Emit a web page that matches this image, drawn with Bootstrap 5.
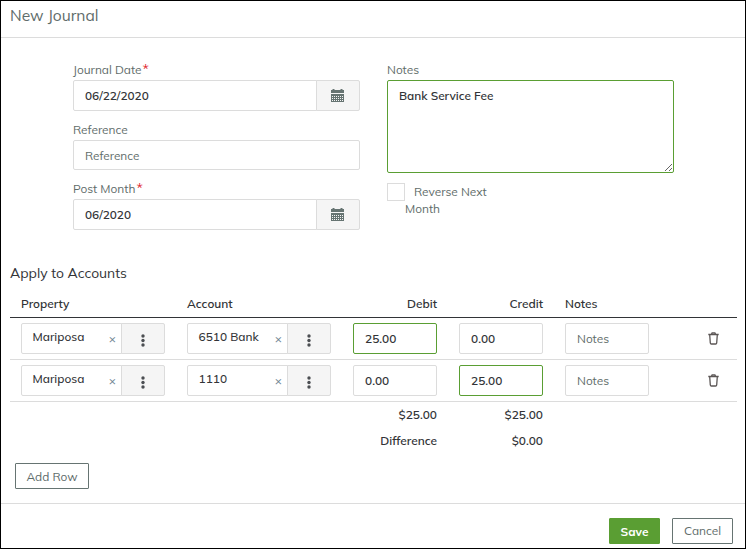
<!DOCTYPE html>
<html lang="en">
<head>
<meta charset="utf-8">
<meta name="viewport" content="width=device-width, initial-scale=1">
<title>New Journal</title>
<link href="https://cdn.jsdelivr.net/npm/bootstrap@5.3.0/dist/css/bootstrap.min.css" rel="stylesheet">
<style>
  :root { --ink: #323437; --soft: #5f6d6b; --line: #dcdcdc; --green: #5a9e33; }
  body { font-family: Mulish, Muli, "Open Sans", sans-serif; font-size: 11.9px; line-height: 17px; color: var(--ink); background: #fff; }
  .journal { height: 549px; border: 1px solid #000; overflow: hidden; }
  .journal-head { height: 37px; padding: 4px 9px 0; border-bottom: 1px solid var(--line); color: var(--soft); font-size: 15.6px; line-height: 20px; }
  .journal-form { padding: 23px 71px 0 72px; gap: 27px; height: 225px; }
  .journal-form > div { width: 287px; }
  .field-label { display: block; height: 19px; line-height: 18px; color: var(--soft); }
  .req { color: #e0262b; font-size: 14px; line-height: 10px; margin-left: 1px; }
  .form-control, .input-group-text { border-color: var(--line); border-radius: 2px; font-size: 11.9px; line-height: 17px; color: var(--ink); }
  .form-control { height: 31px; padding: 6px 11px; font-weight: 600; }
  .form-control::placeholder { color: var(--soft); font-weight: 400; opacity: 1; }
  .form-control.short { height: 30px; }
  .form-control.active-field { border-color: var(--green); }
  .journal-form .form-control { font-weight: 650; font-size: 11.8px; }
  .input-group-text { width: 44px; padding: 0 1px 0 0; justify-content: center; background: #f5f5f5; color: #667472; }
  textarea.form-control { height: 93px; resize: vertical; }
  .gap-field { height: 10px; }
  .form-check-input.box { width: 18px; height: 18px; margin: 0; border: 1px solid var(--line); border-radius: 0; flex: none; }
  .check-text { color: var(--soft); width: 90px; text-indent: 9px; }
  .section-title { font-size: 13.9px; line-height: 20px; margin: 0 0 0 9px; }
  .lines { width: 727px; margin: 10px 0 0 9px; table-layout: fixed; border-collapse: separate; border-spacing: 0; font-weight: 600; }
  .lines th { height: 25px; padding: 2px 11px 5px; line-height: 17px; font-weight: 650; border-bottom: 1px solid var(--ink); }
  .lines tbody td { height: 42px; padding: 5px 11px; border-bottom: 1px solid var(--line); }
  .lines tfoot td { height: 26px; padding: 4px 11px 5px; line-height: 17px; font-weight: 650; }
  .lines .input-group-text { padding: 3px 1px 0 0; }
  .picked { font-weight: 500; padding: 4px 5px 0 10.5px; }
  .picked .clear { color: #6f8592; font-size: 12px; line-height: 22px; }
  .btn { height: 26px; padding: 0; font-size: 11.9px; line-height: 25px; border-radius: 1px; }
  .btn-line { border-color: #667472; color: var(--soft); background: #fff; }
  .btn-go { width: 51px; line-height: 23px; background: var(--green); border-color: var(--green); color: #fff; font-weight: 700; }
  .add-row { width: 74px; margin: 9px 0 0 14px; }
  .cancel { width: 61px; line-height: 24px; }
  .journal-foot { margin-top: 14px; padding: 14px 12px 0; gap: 12px; border-top: 1px solid var(--line); }
  .bin-icon { margin: 0 7px 0 auto; }
  svg { display: block; }
</style>
</head>
<body>
<svg width="0" height="0" class="position-absolute" aria-hidden="true">
  <symbol id="cal" viewBox="0 0 13 13">
    <path fill="currentColor" fill-rule="evenodd" d="M0 1h1.5V0h2v1h6V0h2v1H13v3H0zM0 5h13v8H0zM1 7v1h1V7zM3 7v1h1V7zM5 7v1h1V7zM7 7v1h1V7zM9 7v1h1V7zM11 7v1h1V7zM1 9v1h1V9zM3 9v1h1V9zM5 9v1h1V9zM7 9v1h1V9zM9 9v1h1V9zM11 9v1h1V9zM1 11v1h1v-1zM3 11v1h1v-1zM5 11v1h1v-1zM7 11v1h1v-1zM9 11v1h1v-1zM11 11v1h1v-1z"/>
  </symbol>
  <symbol id="dots" viewBox="0 0 4 13">
    <g fill="#4b4e52"><circle cx="2" cy="2" r="1.7"/><circle cx="2" cy="6.5" r="1.7"/><circle cx="2" cy="11" r="1.7"/></g>
  </symbol>
  <symbol id="bin" viewBox="0 0 11 13">
    <path fill="none" stroke="#5b5655" stroke-width="1.3" d="M.3 2.5h10.4M3.4 2.2L4.1.9h2.8l.7 1.3M1.7 2.8l.6 8.2q.1 1 1 1h4.4q.9 0 1-1l.6-8.2"/>
  </symbol>
</svg>
<main class="journal d-flex flex-column">
  <header class="journal-head flex-shrink-0">New Journal</header>
  <section class="journal-form d-flex flex-shrink-0">
    <div>
      <label class="field-label" for="jd">Journal Date<span class="req">*</span></label>
      <div class="input-group"><input id="jd" class="form-control" value="06/22/2020"><span class="input-group-text"><svg width="13" height="13"><use href="#cal"/></svg></span></div>
      <div class="gap-field"></div>
      <label class="field-label" for="rf">Reference</label>
      <input id="rf" class="form-control short" placeholder="Reference">
      <div class="gap-field"></div>
      <label class="field-label" for="pm">Post Month<span class="req">*</span></label>
      <div class="input-group"><input id="pm" class="form-control" value="06/2020"><span class="input-group-text"><svg width="13" height="13"><use href="#cal"/></svg></span></div>
    </div>
    <div>
      <label class="field-label" for="nt">Notes</label>
      <textarea id="nt" class="form-control active-field">Bank Service Fee</textarea>
      <div class="gap-field"></div>
      <div class="d-flex"><input id="rv" type="checkbox" class="form-check-input box"><label class="check-text" for="rv">Reverse Next Month</label></div>
    </div>
  </section>
  <h2 class="section-title fw-normal">Apply to Accounts</h2>
  <table class="lines flex-shrink-0">
    <colgroup><col style="width:166px"><col style="width:166px"><col style="width:106px"><col style="width:106px"><col style="width:106px"><col></colgroup>
    <thead><tr><th>Property</th><th>Account</th><th class="text-end">Debit</th><th class="text-end">Credit</th><th>Notes</th><th></th></tr></thead>
    <tbody>
      <tr>
        <td><div class="input-group"><div class="form-control picked d-flex justify-content-between"><span>Mariposa</span><span class="clear">×</span></div><span class="input-group-text"><svg width="4" height="13"><use href="#dots"/></svg></span></div></td>
        <td><div class="input-group"><div class="form-control picked d-flex justify-content-between"><span>6510 Bank</span><span class="clear">×</span></div><span class="input-group-text"><svg width="4" height="13"><use href="#dots"/></svg></span></div></td>
        <td><input class="form-control active-field" value="25.00" aria-label="Debit"></td>
        <td><input class="form-control" value="0.00" aria-label="Credit"></td>
        <td><input class="form-control" placeholder="Notes"></td>
        <td><svg class="bin-icon" width="11" height="13"><use href="#bin"/></svg></td>
      </tr>
      <tr>
        <td><div class="input-group"><div class="form-control picked d-flex justify-content-between"><span>Mariposa</span><span class="clear">×</span></div><span class="input-group-text"><svg width="4" height="13"><use href="#dots"/></svg></span></div></td>
        <td><div class="input-group"><div class="form-control picked d-flex justify-content-between"><span>1110</span><span class="clear">×</span></div><span class="input-group-text"><svg width="4" height="13"><use href="#dots"/></svg></span></div></td>
        <td><input class="form-control" value="0.00" aria-label="Debit"></td>
        <td><input class="form-control active-field" value="25.00" aria-label="Credit"></td>
        <td><input class="form-control" placeholder="Notes"></td>
        <td><svg class="bin-icon" width="11" height="13"><use href="#bin"/></svg></td>
      </tr>
    </tbody>
    <tfoot>
      <tr class="text-end"><td></td><td></td><td>$25.00</td><td>$25.00</td><td></td><td></td></tr>
      <tr class="text-end"><td></td><td></td><td>Difference</td><td>$0.00</td><td></td><td></td></tr>
    </tfoot>
  </table>
  <button class="btn btn-line add-row flex-shrink-0">Add Row</button>
  <footer class="journal-foot d-flex justify-content-end"><button class="btn btn-go">Save</button><button class="btn btn-line cancel">Cancel</button></footer>
</main>
<script src="https://cdn.jsdelivr.net/npm/bootstrap@5.3.0/dist/js/bootstrap.bundle.min.js"></script>
</body>
</html>
